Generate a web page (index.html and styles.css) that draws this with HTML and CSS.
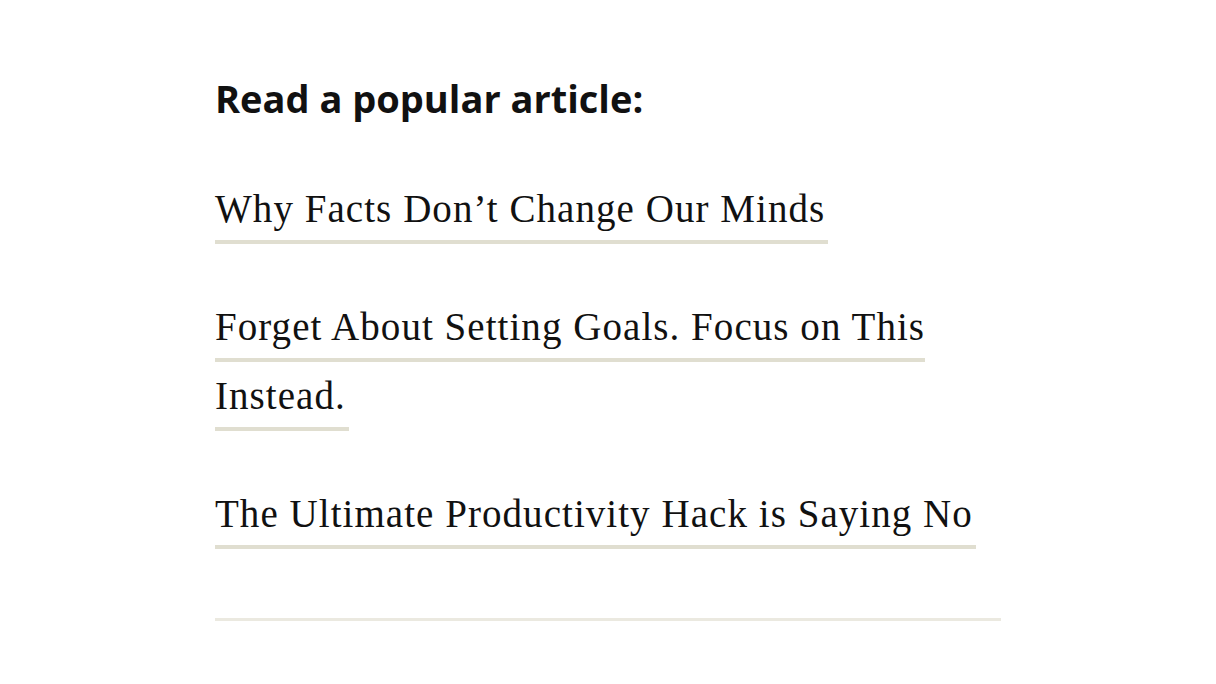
FILE: index.html
```html
<!DOCTYPE html>
<html>
<head>
<meta charset="utf-8">
<link rel="stylesheet" href="styles.css">
</head>
<body>
<section class="popular">
  <h2 class="popular-title">Read a popular article:</h2>
  <ul class="article-list">
    <li class="article-item"><a class="article-link" href="#">Why Facts Don’t Change Our Minds</a></li>
    <li class="article-item"><a class="article-link" href="#">Forget About Setting Goals. Focus on This Instead.</a></li>
    <li class="article-item"><a class="article-link" href="#">The Ultimate Productivity Hack is Saying No</a></li>
  </ul>
  <hr class="divider">
</section>
</body>
</html>
```
FILE: styles.css
```css
html, body {
  margin: 0;
  padding: 0;
  background: #ffffff;
}

.popular {
  width: 786px;
  margin: 0 auto;
  padding-top: 71px;
}

.popular-title {
  margin: 0;
  font-family: "Open Sans", "Lato", sans-serif;
  font-weight: 700;
  font-size: 38px;
  line-height: 54px;
  color: #111111;
}

.article-list {
  list-style: none;
  margin: 0;
  padding: 0;
  margin-top: 49px;
  display: flex;
  flex-direction: column;
  gap: 49px;
}

.article-item {
  font-family: "Liberation Serif", "Times New Roman", serif;
  font-size: 39px;
  letter-spacing: 1.05px;
  line-height: 69px;
  color: #111111;
}

.article-link {
  color: #111111;
  text-decoration: none;
  border-bottom: 4px solid #e0ded0;
  padding-bottom: 10px;
  padding-right: 3px;
}

.divider {
  margin: 70px 0 0 0;
  border: 0;
  height: 3px;
  background: #ebe9e0;
}
```
